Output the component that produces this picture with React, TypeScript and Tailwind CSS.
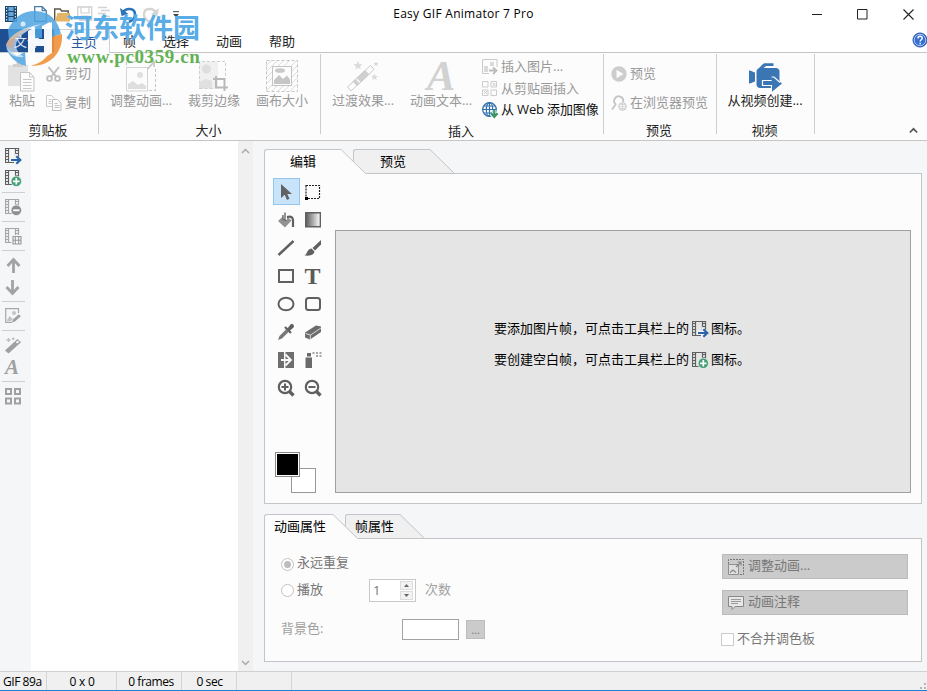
import React from 'react';

type IconProps = { className?: string };

interface SvgProps {
  w: number;
  h: number;
  className?: string;
  children: React.ReactNode;
}

const Svg: React.FC<SvgProps> = ({ w, h, className = '', children }) => (
  <svg width={w} height={h} viewBox={`0 0 ${w} ${h}`} fill="none" className={`shrink-0 ${className}`}>
    {children}
  </svg>
);

/* ---------- Film frame icons ---------- */

const FilmBase = ({ color }: { color: string }) => (
  <>
    <path d="M.5 .5h13v14H.5zM3.5 .5v14M10.500 .5v14" stroke={color} strokeWidth="1.2" />
    <path d="M.5 2.5h3M.5 5.5h3M.5 8.500h3M.5 11.500h3M10.500 2.500h3M10.500 5.500h3M10.500 8.500h3" stroke={color} strokeWidth="1.2" />
  </>
);

const FrameImport = ({ className }: IconProps) => (
  <Svg w={17} h={17} className={className}>
    <FilmBase color="#606060" />
    <path d="M5 13.500V9.500h5V5.500l7 6.500-6 5H9v-3.500z" fill="#f2f3f5" />
    <path d="M6 12h9M11.300 8.200l4 3.800-4 3.800" stroke="#2b64a8" strokeWidth="2.200" />
  </Svg>
);

const FrameAdd = ({ className }: IconProps) => (
  <Svg w={17} h={17} className={className}>
    <FilmBase color="#606060" />
    <circle cx="11.3" cy="11.3" r="5.3" fill="#46a076" stroke="#f5f6f8" strokeWidth=".8" />
    <path d="M11.3 8v6.600M8 11.300h6.600" stroke="#fff" strokeWidth="1.700" />
  </Svg>
);

const FrameRemove = () => (
  <Svg w={17} h={17}>
    <FilmBase color="#a6a6a6" />
    <circle cx="11.3" cy="11.3" r="5.3" fill="#8f8f8f" stroke="#f5f6f8" strokeWidth=".8" />
    <path d="M8.2 11.3h6.2" stroke="#fff" strokeWidth="1.8" />
  </Svg>
);

const FrameCopy = () => (
  <Svg w={17} h={17}>
    <FilmBase color="#a6a6a6" />
    <path d="M6.500 7H17v10H6.500z" fill="#f5f6f8" />
    <path d="M8 8.500h8v7.500H8zM10.300 8.500v7.500M13.700 8.500v7.500M8 12.200h8" stroke="#9a9a9a" strokeWidth="1.1" />
  </Svg>
);

const ArrowUp = () => (
  <Svg w={17} h={17}>
    <path d="M8.5 16V3M2.5 9l6-6.5 6 6.5" stroke="#a3a3a3" strokeWidth="2.8" />
  </Svg>
);

const ArrowDown = () => (
  <Svg w={17} h={17}>
    <path d="M7.5 1v13M1.5 8l6 6.5 6-6.5" stroke="#a3a3a3" strokeWidth="2.8" />
  </Svg>
);

const EditPicture = () => (
  <Svg w={17} h={17}>
    <path d="M13.5 5V.7H.7v13.6H7" stroke="#a8a8a8" strokeWidth="1.2" />
    <circle cx="9" cy="5" r="2" fill="#c4c4c4" />
    <path d="M2 12l2.5-4L8 11l-2 2H2z" fill="#c4c4c4" />
    <path d="M7 14.5l1-3 5.8-5.3 2 2L10 13.6z" fill="#a0a0a0" />
  </Svg>
);

const SmallWand = () => (
  <Svg w={17} h={17}>
    <path d="M0 13.500L12.500 2l3.500 3.200L3.500 16.500z" fill="#a0a0a0" />
    <path d="M10.800 5.200l2-1.800 1.400 1.400-2 1.800z" fill="#f5f6f8" />
    <path d="M1.500 3h4M3.500 1v4M7 1.800h2.500M8.200 .5v2.600" stroke="#c0c0c0" strokeWidth="1.4" />
  </Svg>
);

const LetterA = () => (
  <span className="font-['Liberation_Serif',serif] text-[21px] leading-[17px] italic font-bold text-[#a0a0a0]">A</span>
);

const GridIcon = () => (
  <Svg w={17} h={17}>
    <path d="M1 1h5v5H1zM10 1h5v5h-5zM1 10.5h5v5H1zM10 10.5h5v5h-5z" stroke="#a0a0a0" strokeWidth="2" />
  </Svg>
);

/* ---------- Quick access icons ---------- */

const AppIcon = () => (
  <Svg w={12} h={16}>
    <path d="M0 0h12v16H0z" fill="#1c4672" />
    <path d="M3.4 1h5.2v4H3.4zM3.4 6h5.2v4H3.4zM3.4 11h5.2v4H3.4z" fill="#65a9da" />
    <path d="M1.7 1v15M10.3 1v15" stroke="#fff" strokeWidth="1" strokeDasharray="1.5 1.5" />
  </Svg>
);

const NewIcon = () => (
  <Svg w={13} h={16}>
    <path d="M.7 .7h7.5l4 4v10.6H.7z" fill="#fff" stroke="#4a7ba8" strokeWidth="1.3" />
    <path d="M8.2 .7v4h4" stroke="#4a7ba8" strokeWidth="1.2" />
  </Svg>
);

const OpenIcon = () => (
  <Svg w={16} h={15}>
    <path d="M.7 14V2h5.500l1.500 2h6.500v3" fill="#fff" stroke="#5d5548" strokeWidth="1.4" />
    <path d="M1 14.5L3.5 6H16v8.5z" fill="#e4b565" />
  </Svg>
);

const SaveIcon = () => (
  <Svg w={16} h={16}>
    <path d="M.7 1h14v13H3L.7 12z" stroke="#d0d0d0" strokeWidth="1.3" />
    <path d="M4 1v6h8V1M4.5 14v-4h7v4" stroke="#d0d0d0" strokeWidth="1.2" />
  </Svg>
);

const ListIcon = () => (
  <Svg w={14} h={16}>
    <path d="M0 1.5h9M3 4.5h9M0 7.5h8M3 10.5h9M0 13.5h8" stroke="#d2d2d2" strokeWidth="1.3" />
  </Svg>
);

const UndoIcon = () => (
  <Svg w={17} h={17}>
    <path d="M2 7.5C6 1 14.5 2 15 8c.2 3.500-2.500 6.500-6 8" stroke="#2d73b9" strokeWidth="2.6" />
    <path d="M0 2l1.500 8L8.500 8z" fill="#2d73b9" />
  </Svg>
);

const RedoIcon = () => (
  <Svg w={17} h={17}>
    <path d="M15 7.500C11 1 2.500 2 2 8c-.2 3.500 2 6 5 7.500" stroke="#d5d5d5" strokeWidth="2.4" />
    <path d="M17 2l-1.500 8L9 8z" fill="#d5d5d5" />
  </Svg>
);

/* ---------- Ribbon icons ---------- */

const PasteIcon = () => (
  <Svg w={30} h={30}>
    <path d="M1 3h20v21H1z" fill="#e2e2e2" />
    <path d="M6 5V2h3.500V0h3v2H16v3z" fill="#cfcfcf" />
    <path d="M13.500 10.500h9l4.500 4.500v14H13.500z" fill="#fcfcfc" stroke="#c4c4c4" />
    <path d="M22.500 10.500V15H27M16 17.500h8.500M16 20.500h8.500M16 23.500h8.500M16 26.500h8.500" stroke="#c8c8c8" />
  </Svg>
);

const CutIcon = () => (
  <Svg w={16} h={16}>
    <path d="M2.500 1l8 10M13 1L5 11" stroke="#bdbdbd" strokeWidth="2" />
    <circle cx="3.5" cy="12.5" r="2.4" stroke="#bdbdbd" strokeWidth="1.8" />
    <circle cx="11.5" cy="12.5" r="2.4" stroke="#bdbdbd" strokeWidth="1.8" />
  </Svg>
);

const CopyIcon = () => (
  <Svg w={16} h={16}>
    <path d="M6 11.500H.5V.5h5l3 3M2.500 4.500h3M2.500 6.500h3M2.500 8.500h3" stroke="#cacaca" />
    <path d="M6.500 4.500h5l3.500 3.500v7.500H6.500z" fill="#fcfcfc" stroke="#c0c0c0" />
    <path d="M8.500 8.500h3M8.500 10.500h5M8.500 12.500h5" stroke="#c0c0c0" />
  </Svg>
);

const ResizeIcon = () => (
  <Svg w={32} h={32}>
    <path d="M1.500 31V7.500h21V31z" stroke="#d4d4d4" />
    <path d="M1.500 5V2M4 1.500h20M30.500 9v22M24 30.500h6" stroke="#c6c6c6" strokeDasharray="3 2" />
    <path d="M22.500 9l6-6.500M23.500 1.500H29V7" stroke="#c6c6c6" strokeWidth="1.6" />
    <circle cx="15" cy="15" r="3" fill="#e0e0e0" />
    <path d="M3 29v-5l5-3 5 4 4-2 4 3v3z" fill="#dedede" />
  </Svg>
);

const CropIcon = () => (
  <Svg w={32} h={32}>
    <path d="M1 1.500h19V29H1z" fill="#f0f0f0" />
    <path d="M1.500 29V1.500h26V16M1.500 28.500H16" stroke="#cfcfcf" strokeDasharray="3 2" />
    <circle cx="8.5" cy="9" r="4.5" fill="#dedede" />
    <path d="M1 28v-6l7-3 6 2v7z" fill="#e0e0e0" />
    <path d="M15 19h11.500v12M18 16v11.500h12" stroke="#b9b9b9" strokeWidth="2" />
  </Svg>
);

const CanvasIcon = () => (
  <Svg w={32} h={32}>
    <path
      d="M0 6l6-6M0 12L12 0M0 18L18 0M0 24L24 0M0 31L31 0M6 31L31 6M12 31l19-19M18 31l13-13M24 31l7-7"
      stroke="#dcdcdc"
    />
    <path d="M.5 .5h31v31H.5z" stroke="#c6c6c6" strokeDasharray="3 2" />
    <path d="M6.500 6.500h19v19h-19z" fill="#fcfcfc" stroke="#c3c3c3" />
    <ellipse cx="14" cy="10.5" rx="5" ry="2.3" fill="#c9c9c9" />
    <path d="M8 24v-4l5-5 4 4 4-3.500 3 4V24z" fill="#c6c6c6" />
  </Svg>
);

const WandIcon = () => (
  <Svg w={34} h={32}>
    <path d="M6.500 21.500L19 10l4.500 4.500L11 26z" fill="#d0d0d0" />
    <path d="M10 18.500l4.500 4.500" stroke="#fcfcfc" strokeWidth="1.5" />
    <path d="M1.500 27L24.500 5.500 28 9.500 5 31z" stroke="#c9c9c9" strokeLinejoin="round" />
    <path
      d="M12 1l1.300 3 3.200.3-2.400 2.100.7 3.100-2.800-1.700-2.800 1.700.7-3.100-2.400-2.100 3.200-.3zM28.500 13.500l1 2.300 2.500.2-1.900 1.700.6 2.500-2.200-1.400-2.200 1.400.6-2.500-1.900-1.700 2.500-.2z"
      fill="#dcdcdc"
    />
    <path d="M30 1.500l.7 1.500 1.800.2-1.300 1.200.4 1.700-1.600-.9-1.600.9.4-1.700-1.300-1.200 1.800-.2z" fill="#d9d9d9" />
  </Svg>
);

const InsertPictureIcon = () => (
  <Svg w={16} h={16}>
    <path d="M15 8V.5H.5v14H7" stroke="#cacaca" />
    <path d="M2 13V7h4v6zM8 3h4v4H8z" fill="#dadada" />
    <path d="M7 11.500h7M11 8.500l3.500 3-3.500 3.500" stroke="#bcbcbc" strokeWidth="1.8" />
  </Svg>
);

const ClipartIcon = () => (
  <Svg w={16} h={16}>
    <path d="M.5 .5h5.500v5.500H.5zM9 .5h5.500v5.500H9zM.5 9h5.500v5.500H.5zM9 9h5.500v5.500H9z" stroke="#cccccc" />
    <path d="M10.500 2l3 3M13.500 2l-3 3M2 13l3-3M2 10l3 3" stroke="#cccccc" />
  </Svg>
);

const WebIcon = () => (
  <Svg w={17} h={17}>
    <circle cx="7.5" cy="7.5" r="6.8" stroke="#3470ad" strokeWidth="1.3" />
    <ellipse cx="7.5" cy="7.5" rx="3.2" ry="6.8" stroke="#3470ad" strokeWidth="1.2" />
    <path d="M7.500 .7v13.600M.7 7.500h13.600M1.800 4h11.500M1.800 11h8" stroke="#3470ad" strokeWidth="1.2" />
    <path d="M12.300 8v6M9 11.500l3.300 3.500 3.300-3.500" stroke="#fcfcfc" strokeWidth="4" />
    <path d="M12.300 7.500V14M9 11.300l3.300 3.500 3.300-3.500" stroke="#389468" strokeWidth="2.2" />
  </Svg>
);

const PlayIcon = () => (
  <Svg w={16} h={16}>
    <circle cx="8" cy="8" r="7.7" fill="#cdcdcd" />
    <path d="M5.500 3.800v8.400L12.500 8z" fill="#fcfcfc" />
  </Svg>
);

const BrowserPreviewIcon = () => (
  <Svg w={16} h={16}>
    <path d="M5 9.500a4.500 4.500 0 1 1 7-2.500M5 9L1 14.500" stroke="#c6c6c6" strokeWidth="1.9" />
    <circle cx="11.5" cy="11.5" r="3.8" stroke="#c6c6c6" />
    <path d="M11.500 7.700v7.600M7.700 11.500h7.600M8.500 9.500h6M8.500 13.500h6" stroke="#cfcfcf" strokeWidth=".8" />
  </Svg>
);

const VideoIcon = () => (
  <Svg w={33} h={29}>
    <path d="M0 7.500c2.500 0 3.500 1.500 6 2v9c-2.500.5-3.500 2-6 2z" fill="#3b76b4" />
    <path
      d="M7.500 9c0-2 1-3.300 2.500-4L14 1c.6-.6 1-.8 2-.8h8.500V3H17l-2.500 2H27c2 0 3.500 1.500 3.500 3.500V20L25 25H11c-2 0-3.500-1.500-3.500-3.500z"
      fill="#3b76b4"
    />
    <path d="M14 17.500h9v-5l10 8-10 8.300v-6.300h-9z" fill="#3b76b4" />
    <path d="M13.500 22.500v-5h9.200M22.500 14h2.500l6 5.500" stroke="#fcfcfc" strokeWidth="1.2" />
    <path d="M13 22.500h9.500v3" stroke="#fcfcfc" strokeWidth="1.1" />
  </Svg>
);

/* ---------- Drawing tools ---------- */

const ToolPointer = () => (
  <Svg w={18} h={18}>
    <path d="M4 1v14l3.700-3.200L10 17l2.500-1.200L10.300 11H15z" fill="#626262" />
  </Svg>
);
const ToolSelect = () => (
  <Svg w={18} h={18}>
    <path d="M2 2.500h13.500v13H2z" stroke="#222" strokeWidth="1.2" strokeDasharray="2 1" />
    <path d="M1 14h3v3H1z" fill="#000" />
  </Svg>
);
const ToolFill = () => (
  <Svg w={18} h={18}>
    <path d="M1 10l7-6.500 6.500 6L8 16.500z" fill="#929292" />
    <path d="M8 9V1.500" stroke="#fcfcfc" strokeWidth="4" />
    <path d="M8 9V1.500M6 4v4.500l3.500 1" stroke="#606060" strokeWidth="1.3" />
    <path d="M10 6c4.500-1 6 .5 6 3.500V16" stroke="#606060" strokeWidth="2.2" />
  </Svg>
);
const ToolGradient = () => (
  <Svg w={18} h={18}>
    <defs>
      <linearGradient id="toolGradient">
        <stop offset="0" stopColor="#5a5a5a" />
        <stop offset="1" stopColor="#fff" />
      </linearGradient>
    </defs>
    <path d="M1.700 1.700h14.600v14H1.700z" fill="url(#toolGradient)" stroke="#606060" strokeWidth="1.4" />
  </Svg>
);
const ToolLine = () => (
  <Svg w={18} h={18}>
    <path d="M1.500 16L16.500 2" stroke="#606060" strokeWidth="2.4" />
  </Svg>
);
const ToolBrush = () => (
  <Svg w={18} h={18}>
    <path d="M17 1v4.500l-6 6-2.500-2.500z" fill="#606060" />
    <path d="M7.500 9.500l3 3c-1 4-5 4.500-10 4 3-1.500 2-6 7-7z" fill="#606060" />
  </Svg>
);
const ToolRect = () => (
  <Svg w={18} h={18}>
    <path d="M2 3h14v12H2z" stroke="#606060" strokeWidth="2" />
  </Svg>
);
const ToolText = () => (
  <span className="font-['Liberation_Serif',serif] text-[24px] leading-[18px] font-bold text-[#5a5a5a]">T</span>
);
const ToolEllipse = () => (
  <Svg w={18} h={18}>
    <ellipse cx="9" cy="9" rx="7.5" ry="6.3" stroke="#606060" strokeWidth="2" />
  </Svg>
);
const ToolRoundRect = () => (
  <Svg w={18} h={18}>
    <rect x="2" y="3" width="14" height="12" rx="2.5" stroke="#606060" strokeWidth="2" />
  </Svg>
);
const ToolDropper = () => (
  <Svg w={18} h={18}>
    <path d="M1 17l1.500-4L9 6.500l2.500 2.500L5 15.500z" fill="#777" />
    <path d="M8 4l6 6" stroke="#606060" strokeWidth="2.2" />
    <path d="M10 6l3.500-4.500c2-1.500 4.500 1 3 3L12.500 8z" fill="#606060" />
  </Svg>
);
const ToolEraser = () => (
  <Svg w={18} h={18}>
    <path d="M1 9.500L12 2.500l5 1V9L6 16.500l-5-2z" fill="#6c6c6c" />
    <path d="M1.500 10.500l5 1.500L17 5M6.300 12v4" stroke="#e8e8e8" strokeWidth=".9" />
  </Svg>
);
const ToolReplace = () => (
  <Svg w={18} h={18}>
    <path d="M1 1h6v16H1zM8.500 1H17v16H8.500z" fill="#6e6e6e" />
    <path d="M4 9h9M8.500 3.500L14 9l-5.500 5.500" stroke="#fcfcfc" strokeWidth="1.8" />
  </Svg>
);
const ToolSpray = () => (
  <Svg w={18} h={18}>
    <path d="M1.500 6.500h6.500V17H1.500zM3 2h4v3.500H3z" fill="#6a6a6a" />
    <path d="M8.500 2h2M12 2h2M15.500 2h2M12 5h2M15.500 5h2" stroke="#8a8a8a" strokeWidth="1.7" />
  </Svg>
);
const ToolZoomIn = () => (
  <Svg w={18} h={18}>
    <circle cx="8" cy="8" r="6.2" stroke="#606060" strokeWidth="2.2" />
    <path d="M12.500 12.500l4 4" stroke="#606060" strokeWidth="3.4" />
    <path d="M8 4.500v7M4.500 8h7" stroke="#606060" strokeWidth="2" />
  </Svg>
);
const ToolZoomOut = () => (
  <Svg w={18} h={18}>
    <circle cx="8" cy="8" r="6.2" stroke="#606060" strokeWidth="2.2" />
    <path d="M12.500 12.500l4 4" stroke="#606060" strokeWidth="3.4" />
    <path d="M4.500 8h7" stroke="#606060" strokeWidth="2" />
  </Svg>
);

const tools = [
  ToolPointer, ToolSelect,
  ToolFill, ToolGradient,
  ToolLine, ToolBrush,
  ToolRect, ToolText,
  ToolEllipse, ToolRoundRect,
  ToolDropper, ToolEraser,
  ToolReplace, ToolSpray,
  ToolZoomIn, ToolZoomOut,
];

/* ---------- Window header ---------- */

const TitleBar = () => (
  <div className="flex h-[29px] items-center bg-white pb-px">
    <div className="flex w-[340px] items-center pl-[5px]">
      <AppIcon />
      <div className="ml-[17px]"><NewIcon /></div>
      <div className="ml-[7px]"><OpenIcon /></div>
      <div className="ml-[7px]"><SaveIcon /></div>
      <div className="ml-[5px]"><ListIcon /></div>
      <div className="ml-[8px]"><UndoIcon /></div>
      <div className="ml-[5px]"><RedoIcon /></div>
      <Svg w={8} h={7} className="ml-[13px]">
        <path d="M1 .7h6" stroke="#444" />
        <path d="M1 3h6L4 6.500z" fill="#444" />
      </Svg>
    </div>
    <div className="w-[247px] text-center text-[12px] tracking-[0.28px] text-black">Easy GIF Animator 7 Pro</div>
    <div className="ml-auto flex items-center pr-[13px]">
      <Svg w={11} h={11}><path d="M0 5.500h10" stroke="#222" /></Svg>
      <Svg w={11} h={11} className="ml-[34px]"><path d="M.5 .5h9.500v9.500H.5z" stroke="#222" /></Svg>
      <Svg w={11} h={11} className="ml-[35px]"><path d="M.5 .5l10 10M10.500 .5l-10 10" stroke="#222" strokeWidth="1.1" /></Svg>
    </div>
  </div>
);

const MenuTabs = () => (
  <div className="flex h-[24px] border-b border-[#c6c6c6] bg-white leading-[25px]">
    <div className="w-[54px] bg-[#1e4f93] pl-[14px] text-[#dbe6f3]">文件</div>
    <div className="-mb-px w-[56px] border border-b-0 border-[#d2d2d2] bg-[#fcfcfc] pl-[16px] text-[#2b579a]">主页</div>
    <div className="ml-[13px] w-[40px]">帧</div>
    <div className="w-[53px]">选择</div>
    <div className="w-[53px]">动画</div>
    <div>帮助</div>
    <div className="mt-[3px] ml-auto">
      <Svg w={15} h={16}>
        <circle cx="8" cy="8" r="7" fill="#356fd2" stroke="#1e4fa8" />
        <circle cx="8" cy="8" r="5.8" stroke="#bcd3f5" strokeWidth=".9" />
        <path d="M6 6.500c0-3 4.200-2.700 4.200-.3C10.200 7.800 8.200 7.700 8.200 9.500M8.200 10.700v1.600" stroke="#fff" strokeWidth="1.5" />
      </Svg>
    </div>
  </div>
);

/* ---------- Ribbon ---------- */

interface RibbonGroupProps {
  title: string;
  className: string;
  children: React.ReactNode;
}

const RibbonGroup: React.FC<RibbonGroupProps> = ({ title, className, children }) => (
  <>
    <div className={`flex shrink-0 flex-col ${className}`}>
      <div className="flex h-[68px]">{children}</div>
      <div className="pr-[2px] text-center leading-[20px] text-[#222]">{title}</div>
    </div>
    <div className="mt-px h-[80px] w-px shrink-0 bg-[#cdcdcd]" />
  </>
);

interface BigButtonProps {
  icon: React.ReactNode;
  label: string;
  className: string;
  active?: boolean;
}

const BigButton: React.FC<BigButtonProps> = ({ icon, label, className, active }) => (
  <div className={`flex shrink-0 flex-col items-center ${className} ${active ? 'text-[#222]' : 'text-[#999]'}`}>
    <div className="flex h-[39px] items-end">{icon}</div>
    <div className="leading-[17px] whitespace-nowrap">{label}</div>
  </div>
);

interface SmallButtonProps {
  icon: React.ReactNode;
  label: string;
  active?: boolean;
}

const SmallButton: React.FC<SmallButtonProps> = ({ icon, label, active }) => (
  <div
    className={`flex h-[22px] items-center whitespace-nowrap ${active ? 'tracking-[-0.15px] text-[#111]' : 'text-[#999]'}`}
  >
    <div className="w-[19px] shrink-0">{icon}</div>
    {label}
  </div>
);

const Ribbon = () => (
  <div className="flex h-[88px] border-b border-[#c6c6c6] bg-[#fcfcfc]">
    <RibbonGroup title="剪贴板" className="w-[98px]">
      <BigButton icon={<PasteIcon />} label="粘贴" className="w-[44px]" />
      <div className="ml-[2px] flex flex-col gap-[7px] pt-[10px]">
        <SmallButton icon={<CutIcon />} label="剪切" />
        <SmallButton icon={<CopyIcon />} label="复制" />
      </div>
    </RibbonGroup>
    <RibbonGroup title="大小" className="w-[221px]">
      <BigButton icon={<ResizeIcon />} label="调整动画..." className="ml-[6px] w-[72px]" />
      <BigButton icon={<CropIcon />} label="裁剪边缘" className="w-[74px]" />
      <BigButton icon={<CanvasIcon />} label="画布大小" className="w-[62px]" />
    </RibbonGroup>
    <RibbonGroup title="插入" className="w-[282px]">
      <BigButton icon={<WandIcon />} label="过渡效果..." className="w-[84px]" />
      <BigButton
        icon={
          <span className="font-['Liberation_Serif',serif] text-[43px] leading-[33px] font-bold text-[#d2d2d2] italic">A</span>
        }
        label="动画文本..."
        className="w-[72px]"
      />
      <div className="ml-[5px] flex flex-col pt-[3px]">
        <SmallButton icon={<InsertPictureIcon />} label="插入图片..." />
        <SmallButton icon={<ClipartIcon />} label="从剪贴画插入" />
        <SmallButton icon={<WebIcon />} label="从 Web 添加图像" active />
      </div>
    </RibbonGroup>
    <RibbonGroup title="预览" className="w-[112px]">
      <div className="ml-[7px] flex flex-col gap-[7px] pt-[10px]">
        <SmallButton icon={<PlayIcon />} label="预览" />
        <SmallButton icon={<BrowserPreviewIcon />} label="在浏览器预览" />
      </div>
    </RibbonGroup>
    <RibbonGroup title="视频" className="w-[97px]">
      <BigButton icon={<VideoIcon />} label="从视频创建..." className="w-[96px]" active />
    </RibbonGroup>
    <div className="mt-[74px] mr-[9px] ml-auto">
      <Svg w={9} h={7}><path d="M.8 5.500l3.700-3.700 3.700 3.700" stroke="#555" strokeWidth="1.7" /></Svg>
    </div>
  </div>
);

/* ---------- Left side ---------- */

const sideGroups = [
  [FrameImport, FrameAdd],
  [FrameRemove],
  [FrameCopy],
  [ArrowUp, ArrowDown],
  [EditPicture],
  [SmallWand, LetterA],
  [GridIcon],
];

const SideToolbar = () => (
  <div className="w-[31px] shrink-0 pt-[4px]">
    {sideGroups.map((group, i) => (
      <div key={i}>
        {i > 0 && <div className="my-[3px] ml-[2px] h-px w-[23px] bg-[#cdcfd2]" />}
        {group.map((Icon, j) => (
          <div key={j} className="flex h-[22px] items-center pl-[5px]">
            <Icon />
          </div>
        ))}
      </div>
    ))}
  </div>
);

const FrameList = () => (
  <div className="flex w-[222px] shrink-0 bg-white">
    <div className="ml-auto flex w-[15px] flex-col items-center justify-between bg-[#f0f0f0] pt-[7px] pb-[5px]">
      <Svg w={9} h={6}><path d="M1 5l3.500-3.500L8 5" stroke="#aaa" strokeWidth="1.5" /></Svg>
      <Svg w={9} h={6}><path d="M1 1l3.500 3.500L8 1" stroke="#aaa" strokeWidth="1.5" /></Svg>
    </div>
  </div>
);

/* ---------- Tabbed panels ---------- */

interface TabProps {
  label: string;
  className: string;
  active?: boolean;
}

const Tab: React.FC<TabProps> = ({ label, className, active }) => (
  <div className={`relative flex h-[25px] shrink-0 ${active ? 'z-10' : '-ml-[13px]'}`}>
    <div
      className={`rounded-tl-[3px] border-t border-l border-[#c3c5c9] leading-[22px] text-black ${active ? 'bg-[#fcfcfc]' : 'bg-[#f0f0f0]'} ${className}`}
    >
      {label}
    </div>
    <Svg w={25} h={25}>
      <path d="M0 0l25 25H0z" fill={active ? '#fcfcfc' : '#f0f0f0'} />
      <path d="M0 .5l24.500 24" stroke="#c3c5c9" />
      {!active && <path d="M0 24.500h25" stroke="#c3c5c9" />}
    </Svg>
  </div>
);

interface PanelProps {
  tabs: React.ReactNode;
  className: string;
  children: React.ReactNode;
}

const Panel: React.FC<PanelProps> = ({ tabs, className, children }) => (
  <div className="w-[658px]">
    <div className="relative -mb-px flex">{tabs}</div>
    <div className={`border border-[#c3c5c9] bg-[#fcfcfc] ${className}`}>{children}</div>
  </div>
);

const EditorPanel = () => (
  <Panel
    className="flex h-[331px]"
    tabs={
      <>
        <Tab label="编辑" className="w-[77px] pl-[25px]" active />
        <Tab label="预览" className="w-[77px] border-b pl-[26px]" />
      </>
    }
  >
    <div className="w-[70px] shrink-0 pt-[4px] pl-[8px]">
      <div className="grid grid-cols-[27px_27px] gap-y-px">
        {tools.map((Tool, i) => (
          <div
            key={i}
            className={`flex h-[27px] items-center justify-center pr-[2px] ${i === 0 ? 'border border-[#92c6ef] bg-[#c8e4fb]' : ''}`}
          >
            <Tool />
          </div>
        ))}
      </div>
      {/* Foreground and background colour swatches */}
      <div className="relative mt-[51px] ml-[2px] h-[41px] w-[41px]">
        <div className="absolute right-0 bottom-0 h-[25px] w-[25px] border border-[#999] bg-white" />
        <div className="absolute top-0 left-0 h-[25px] w-[25px] border border-[#888] bg-black shadow-[inset_0_0_0_1px_#fff]" />
      </div>
    </div>
    <div className="mt-[56px] flex h-[263px] w-[576px] flex-col items-center justify-center gap-[9px] border border-[#a0a0a0] bg-[#e5e5e5] pr-[2px] pb-[34px] text-black">
      <div className="flex h-[22px] items-center">
        要添加图片帧，可点击工具栏上的
        <FrameImport className="mx-[2px] ml-[3px]" />
        图标。
      </div>
      <div className="flex h-[22px] items-center">
        要创建空白帧，可点击工具栏上的
        <FrameAdd className="mx-[2px] ml-[3px]" />
        图标。
      </div>
    </div>
  </Panel>
);

const Radio = ({ checked = false }: { checked?: boolean }) => (
  <div className="mr-[3px] flex h-[13px] w-[13px] items-center justify-center rounded-full border border-[#c2c2c2] bg-white">
    {checked && <div className="h-[7px] w-[7px] rounded-full bg-[#bdbdbd]" />}
  </div>
);

const PropertiesPanel = () => (
  <Panel
    className="flex h-[124px] justify-between pr-[13px] text-[#777]"
    tabs={
      <>
        <Tab label="动画属性" className="w-[69px] pl-[9px] whitespace-nowrap" active />
        <Tab label="帧属性" className="w-[55px] border-b pl-[9px] whitespace-nowrap" />
      </>
    }
  >
    <div className="pt-[13px] pl-[16px]">
      <div className="flex h-[24px] items-center">
        <Radio checked />
        <span className="pb-[2px]">永远重复</span>
      </div>
      <div className="mt-[2px] flex h-[25px] items-center">
        <Radio />
        <span className="pb-[2px]">播放</span>
        <div className="ml-[46px] flex h-[23px] w-[47px] items-center justify-between border border-[#c8c8c8] bg-white pr-[2px] pl-[3px]">
          <span>1</span>
          <div className="flex flex-col gap-px">
            <div className="flex h-[9px] w-[13px] items-center justify-center border border-[#dcdcdc] bg-[#f2f2f2]">
              <Svg w={5} h={3}><path d="M0 3h5L2.500 0z" fill="#666" /></Svg>
            </div>
            <div className="flex h-[9px] w-[13px] items-center justify-center border border-[#dcdcdc] bg-[#f2f2f2]">
              <Svg w={5} h={3}><path d="M0 0h5L2.500 3z" fill="#666" /></Svg>
            </div>
          </div>
        </div>
        <span className="ml-[9px] pb-[2px] text-[#a0a0a0]">次数</span>
      </div>
      <div className="mt-[16px] flex h-[21px] items-center text-[#a0a0a0]">
        <span className="w-[121px] pb-[2px]">背景色:</span>
        <div className="h-[21px] w-[57px] border border-[#a2a2a2] bg-white" />
        <div className="ml-[7px] h-[19px] w-[19px] border border-[#bdbdbd] bg-[#cbcbcb] text-center text-[11px] leading-[17px] text-[#777]">...</div>
      </div>
    </div>
    <div className="w-[187px] pt-[15px] text-[#777]">
      <div className="ml-px flex h-[25px] w-[186px] items-center border border-[#bbb] bg-[#cbcbcb] pl-[5px]">
        <Svg w={16} h={16}>
          <path d="M.5 5V.5h15v15H12" stroke="#777" strokeDasharray="2 1" />
          <path d="M.5 5.500h10v10H.5z" fill="#dedede" stroke="#8f8f8f" />
          <path d="M2 13.500l3-2.500 3 2.500M8 8l5-5M9.500 3H13v3.500" stroke="#888" strokeWidth="1.2" />
        </Svg>
        <span className="ml-[4px] pb-[2px]">调整动画...</span>
      </div>
      <div className="mt-[11px] ml-px flex h-[25px] w-[186px] items-center border border-[#bbb] bg-[#cbcbcb] pl-[5px]">
        <Svg w={16} h={16}>
          <path d="M.5 1.500h15v10H7l-3 3v-3H.5z" fill="#e8e8e8" stroke="#888" />
          <path d="M3 4.500h10M3 6.500h10M3 8.500h7" stroke="#999" />
        </Svg>
        <span className="ml-[4px] pb-[2px]">动画注释</span>
      </div>
      <div className="mt-[14px] flex h-[20px] items-center">
        <div className="mr-[3px] h-[13px] w-[13px] border border-[#cbcbcb] bg-white" />
        不合并调色板
      </div>
    </div>
  </Panel>
);

const StatusBar = () => (
  <div className="flex h-[20px] border-t border-b border-t-[#d0d0d0] border-b-[#1883d7] bg-[#f0f0f0] text-center text-[12px] leading-[19px] tracking-[-0.45px] text-black">
    <div className="w-[47px] border-r border-[#d4d4d4] pl-[3px] text-left whitespace-nowrap">GIF 89a</div>
    <div className="w-[70px] border-r border-[#d4d4d4] pl-px tracking-[-0.2px]">0 x 0</div>
    <div className="w-[65px] border-r border-[#d4d4d4] pl-[4px]">0 frames</div>
    <div className="w-[55px] border-r border-[#d4d4d4] pl-px">0 sec</div>
    <div className="w-[55px] border-r border-[#d4d4d4]" />
    <div className="mt-[11px] ml-auto">
      <Svg w={7} h={7}>
        <path d="M4 0h2v2H4zM0 4h2v2H0zM4 4h2v2H4z" fill="#b5b5b5" />
      </Svg>
    </div>
  </div>
);

/* ---------- Site watermark laid over the window's corner ---------- */

const Watermark = () => (
  <div className="pointer-events-none absolute top-[10px] left-[4px] z-20 flex">
    <Svg w={60} h={58}>
      <path d="M4 20C9 8 18 1 31 1c14 0 23 9 26 23l-11 4V12l-8 4v12h-8V16L5 31z" fill="#4ea3df" opacity=".85" />
      <path d="M58 24c1 16-9 32-31 32 9-3 13-6 16-10V28z" fill="#f0923c" opacity=".92" />
      <path d="M2 38c4 9 9 15 20 18l-1-14-8 4z" fill="#4ea3df" opacity=".85" />
      {/* White river sweep with its orange edge */}
      <path d="M2 35C6 24 20 17 38 14 22 20 13 27 12 35c0 5 3 9 8 12C9 48 3 43 2 35z" fill="#fff" opacity=".6" />
      <path d="M2 34c4-8 12-13 23-16C14 24 9 29 8 38c-3-1-5-2-6-4z" fill="#ef9b50" opacity=".45" />
      <path d="M24 21l7-4v12h9V16l8-4v31l-8 5V36h-9v15l-7 3z" fill="#fff" opacity=".95" />
      <circle cx="19" cy="14" r="2.5" fill="#d5eafa" />
    </Svg>
    <div className="pl-[1px]">
      <div className="text-[27px] leading-[36px] font-bold whitespace-nowrap text-[#5aace6]">河东软件园</div>
      <div className="pl-[2px] font-['Liberation_Serif',serif] text-[19px] leading-[22px] font-bold tracking-[0.6px] text-[#62b253]">
        www.pc0359.cn
      </div>
    </div>
  </div>
);

const App: React.FC = () => {
  return (
    <div className="relative flex h-[691px] w-[927px] flex-col overflow-hidden bg-[#f5f6f8] font-['Open_Sans','Noto_Sans_CJK_SC',sans-serif] text-[13px] text-[#222]">
      <TitleBar />
      <MenuTabs />
      <Ribbon />
      <div className="flex h-[530px]">
        <SideToolbar />
        <FrameList />
        <div className="ml-[11px] flex flex-col gap-[10px] pt-[8px]">
          <EditorPanel />
          <PropertiesPanel />
        </div>
      </div>
      <StatusBar />
      <Watermark />
    </div>
  );
};

export default App;
